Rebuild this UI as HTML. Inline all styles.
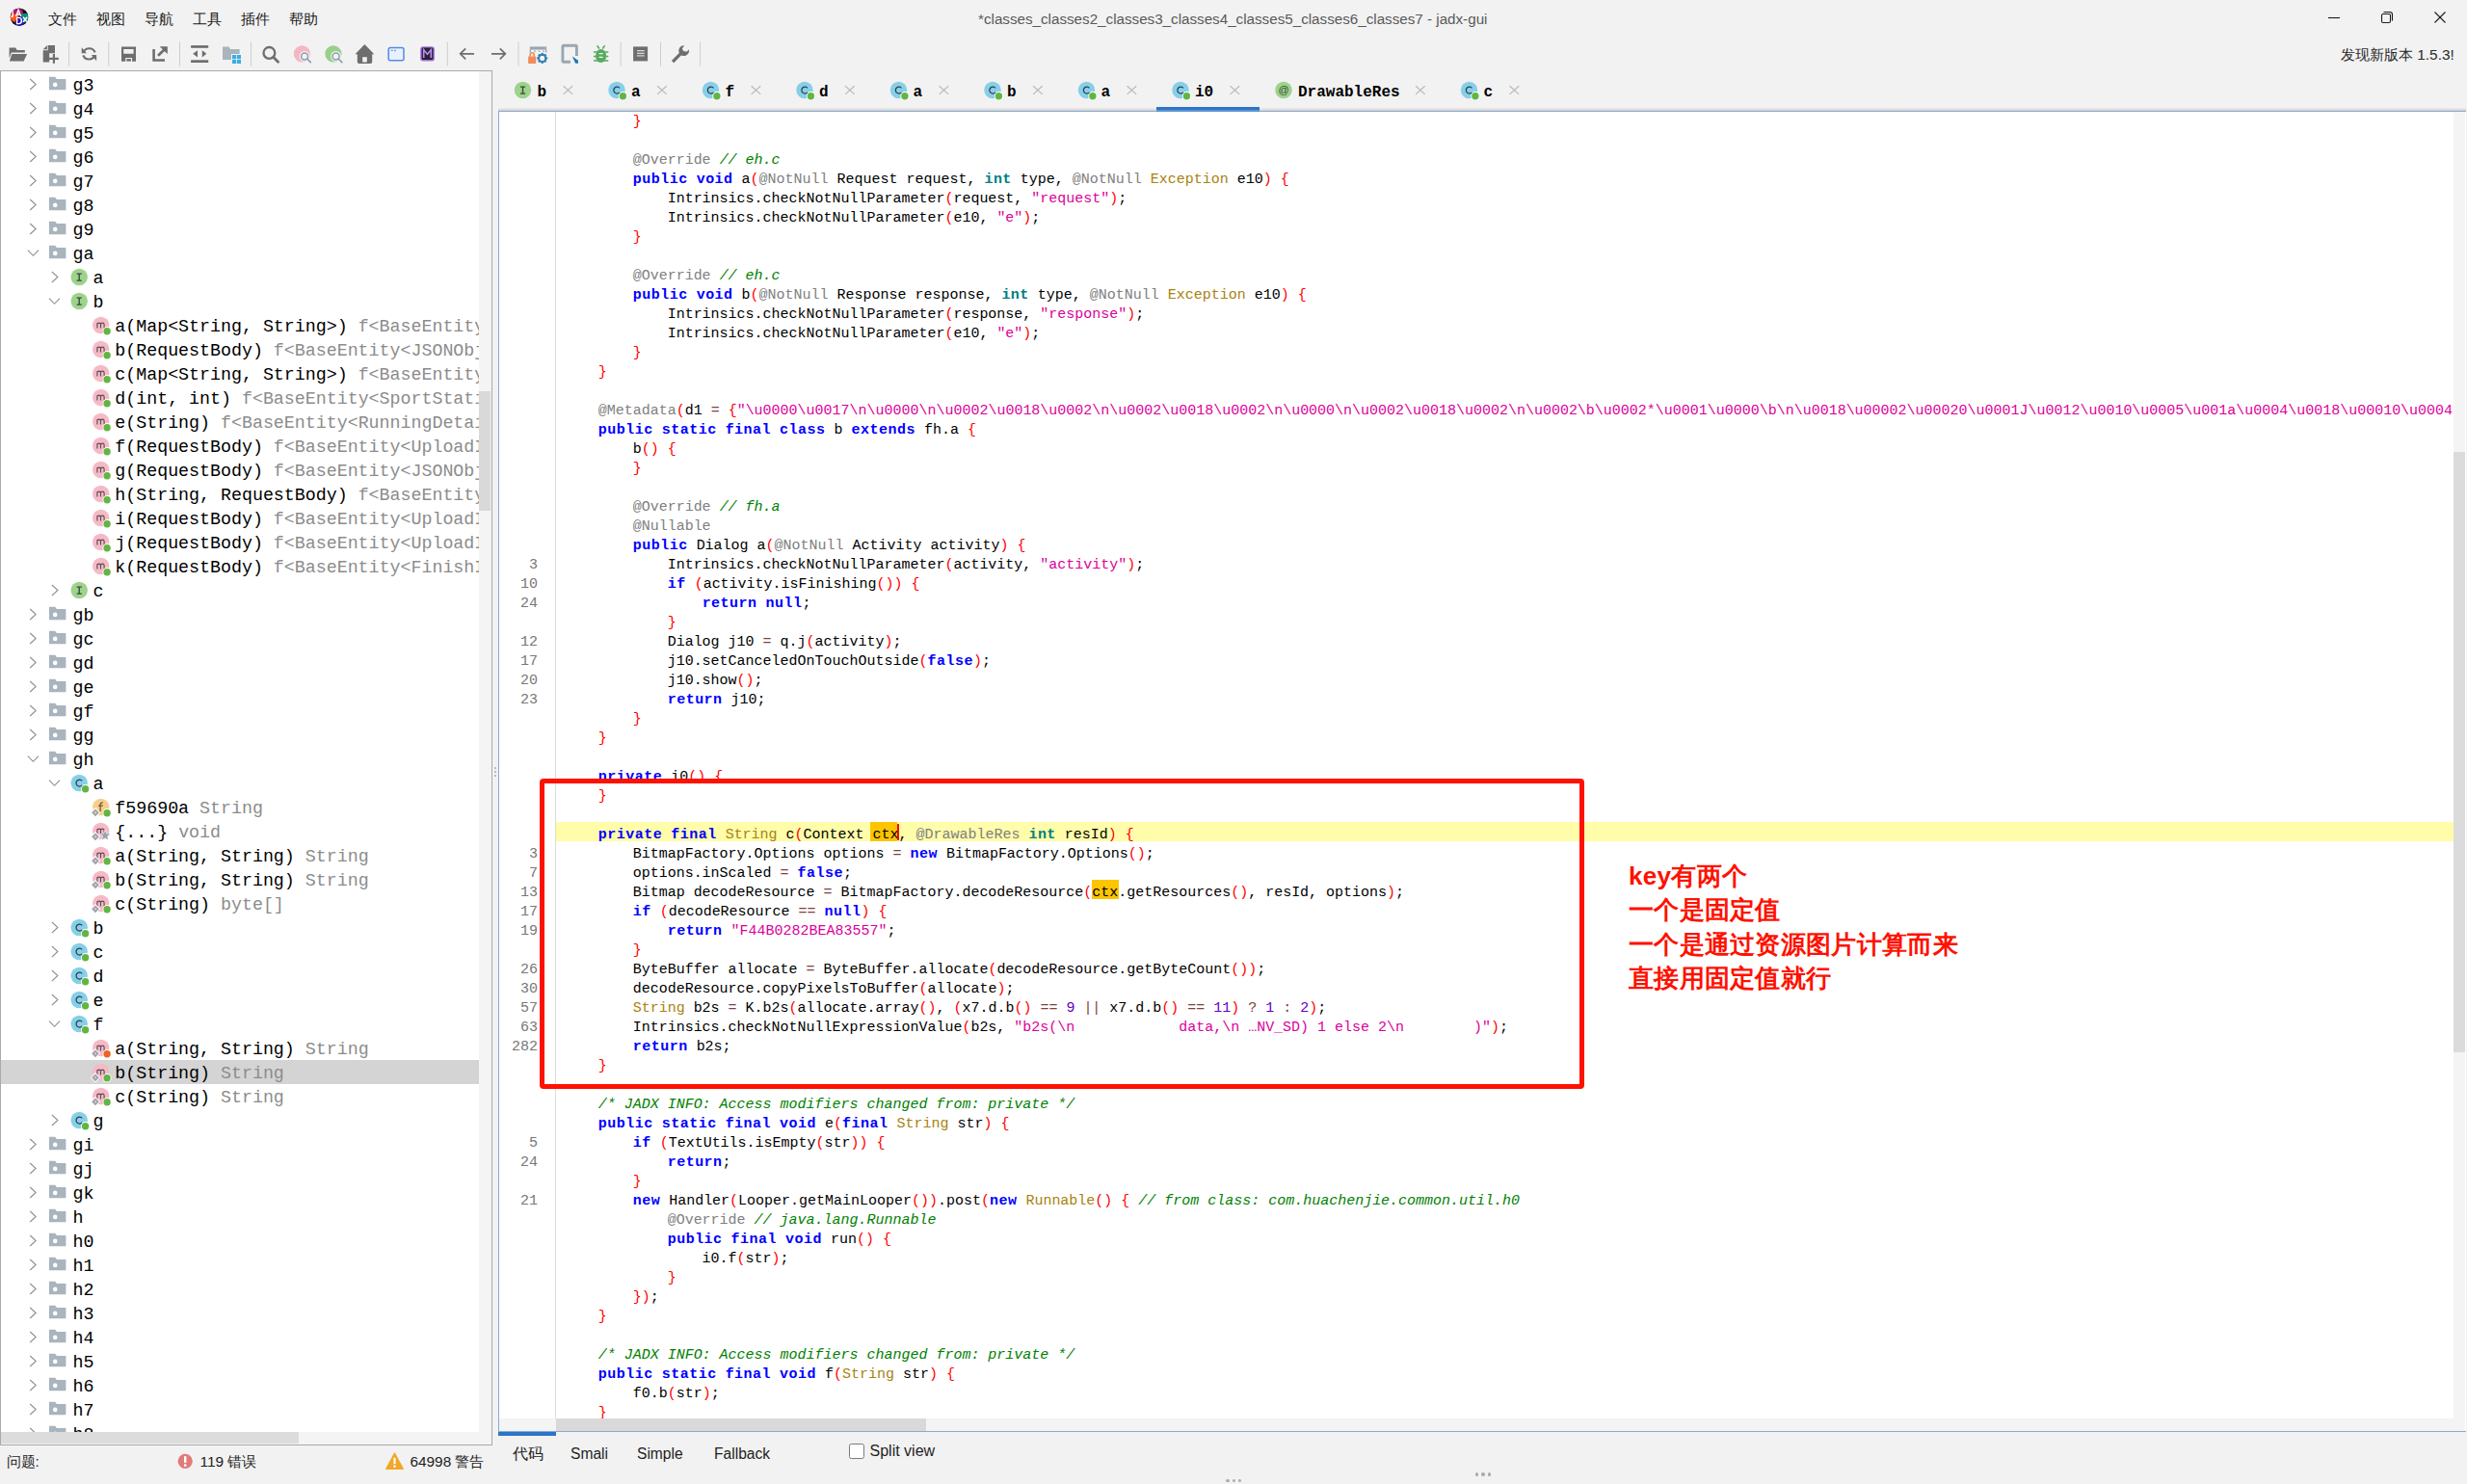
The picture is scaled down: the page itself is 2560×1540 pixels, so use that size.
<!DOCTYPE html><html><head><meta charset="utf-8"><title>jadx-gui</title><style>
*{margin:0;padding:0;box-sizing:border-box}
html,body{width:2560px;height:1540px;overflow:hidden;background:#f2f2f2}
body{position:relative;font-family:"Liberation Sans", sans-serif}
.a{position:absolute}
.m{font-family:"Liberation Mono", monospace;white-space:pre}
.s{font-family:"Liberation Sans", sans-serif;white-space:pre}
.kw{color:#0000ff;font-weight:bold;letter-spacing:0.5px}
.dt{color:#008080;font-weight:bold;letter-spacing:0.5px}
.an{color:#808080}
.cm{color:#008000;font-style:italic}
.st{color:#dc009c}
.sp{color:#ff0000}
.op{color:#804040}
.nu{color:#6400c8}
.fn{color:#a8820e}
.g{color:#8c8c8c}
svg{position:absolute;overflow:visible}
</style></head><body>
<svg class="a" style="left:0;top:0" width="40" height="36" viewBox="0 0 40 36">
<defs><clipPath id="lc"><circle cx="20" cy="17.7" r="9.3"/></clipPath></defs>
<circle cx="20" cy="17.7" r="9.3" fill="#0a0a0a"/>
<g clip-path="url(#lc)">
<path d="M12.5,11 L16,9.2 L23,9.6 L24.2,14 L19.8,16 L12.5,15 Z" fill="#b3147c"/>
<path d="M10.5,16 L12.8,14.2 L20.5,15.2 L15.2,23.2 L10.8,20.2 Z" fill="#ff5a1e"/>
<path d="M22.3,14.2 L29.5,13.6 L29.5,22 L24.8,24 L21.5,18.5 Z" fill="#0e8c7b"/>
<path d="M14.8,24.2 L20.6,17.2 L22.6,17.6 L25.6,24.6 L20,27.2 Z" fill="#2a0fc0"/>
<path d="M11.4,11.6 H13.2 V16.2 Q13.2,17.6 11.4,17.4" fill="none" stroke="#ffffff" stroke-width="1.4"/>
<path d="M16.6,17 L19.1,10.2 L21.7,17 M17.6,14.8 H20.7" fill="none" stroke="#ffffff" stroke-width="1.4"/>
<path d="M17.6,18.4 H19.6 Q22.4,18.4 22.4,21.5 Q22.4,24.6 19.6,24.6 H17.6 Z" fill="none" stroke="#ffffff" stroke-width="1.4"/>
<path d="M24,17.8 L28.2,22.8 M28.2,17.8 L24,22.8" fill="none" stroke="#ffffff" stroke-width="1.4"/>
</g>
</svg>
<div class="a s" style="left:50px;top:10.30px;font-size:15px;line-height:20px;color:#1a1a1a">文件</div>
<div class="a s" style="left:100px;top:10.30px;font-size:15px;line-height:20px;color:#1a1a1a">视图</div>
<div class="a s" style="left:150px;top:10.30px;font-size:15px;line-height:20px;color:#1a1a1a">导航</div>
<div class="a s" style="left:200px;top:10.30px;font-size:15px;line-height:20px;color:#1a1a1a">工具</div>
<div class="a s" style="left:250px;top:10.30px;font-size:15px;line-height:20px;color:#1a1a1a">插件</div>
<div class="a s" style="left:300px;top:10.30px;font-size:15px;line-height:20px;color:#1a1a1a">帮助</div>
<div class="a s" style="left:1015px;top:10.23px;font-size:15.2px;line-height:20px;color:#5a5a5a">*classes_classes2_classes3_classes4_classes5_classes6_classes7 - jadx-gui</div>
<svg class="a" style="left:0;top:0" width="2560" height="36">
<line x1="2416" y1="18.5" x2="2428" y2="18.5" stroke="#1a1a1a" stroke-width="1.1"/>
<rect x="2471.5" y="14.5" width="9" height="9" rx="1.5" fill="none" stroke="#1a1a1a" stroke-width="1.1"/>
<path d="M2473.5,12.5 h6.5 a2.5,2.5 0 0 1 2.5,2.5 v6.5" fill="none" stroke="#1a1a1a" stroke-width="1.1"/>
<line x1="2526.5" y1="12.5" x2="2537.5" y2="23.5" stroke="#1a1a1a" stroke-width="1.1"/>
<line x1="2537.5" y1="12.5" x2="2526.5" y2="23.5" stroke="#1a1a1a" stroke-width="1.1"/>
</svg>
<svg class="a" style="left:0;top:0" width="740" height="74"><line x1="71.6" y1="43.5" x2="71.6" y2="68.5" stroke="#cdcdcd" stroke-width="1"/><line x1="112.8" y1="43.5" x2="112.8" y2="68.5" stroke="#cdcdcd" stroke-width="1"/><line x1="186.5" y1="43.5" x2="186.5" y2="68.5" stroke="#cdcdcd" stroke-width="1"/><line x1="260.5" y1="43.5" x2="260.5" y2="68.5" stroke="#cdcdcd" stroke-width="1"/><line x1="464.3" y1="43.5" x2="464.3" y2="68.5" stroke="#cdcdcd" stroke-width="1"/><line x1="538" y1="43.5" x2="538" y2="68.5" stroke="#cdcdcd" stroke-width="1"/><line x1="644.2" y1="43.5" x2="644.2" y2="68.5" stroke="#cdcdcd" stroke-width="1"/><line x1="685.5" y1="43.5" x2="685.5" y2="68.5" stroke="#cdcdcd" stroke-width="1"/><line x1="726.6" y1="43.5" x2="726.6" y2="68.5" stroke="#cdcdcd" stroke-width="1"/><path d="M9.6,49.6 H16.2 L17.7,51.9 H25.8 V54.6 H11.8 L9.6,60.3 Z" fill="#6e6e6e"/><path d="M12.3,55.9 H28.1 L24.6,63.6 H9.9 Z" fill="#6e6e6e"/><path d="M49.7,47.1 H57 V55.2 H51.2 V64.6 H44.7 V52.3 H49.7 Z" fill="#6e6e6e"/><path d="M44.7,51.3 L48.9,47.1 V51.3 Z" fill="#6e6e6e"/><path d="M55.9,56 V65.7 M51,60.8 H60.8" stroke="#6e6e6e" stroke-width="2.2"/><path d="M86.6,54.4 A6.4,6.4 0 0 1 98.6,54.4" fill="none" stroke="#6e6e6e" stroke-width="2.1"/><path d="M84.7,49.2 V55.2 H90 Z" fill="#6e6e6e"/><path d="M98.3,57.4 A6.4,6.4 0 0 1 86.3,57.4" fill="none" stroke="#6e6e6e" stroke-width="2.1"/><path d="M100.1,63.2 V56.9 H94.8 Z" fill="#6e6e6e"/><path d="M126,48.4 H141 V63.8 H137.1 V60 H130.2 V63.8 H126 Z M128.2,50.9 V55.7 H138.6 V50.9 Z" fill="#6e6e6e" fill-rule="evenodd"/><rect x="131.3" y="61.1" width="4.6" height="2.5" fill="#6e6e6e"/><path d="M159.6,51.1 V62.5 H171" fill="none" stroke="#6e6e6e" stroke-width="2.6"/><path d="M164,57.8 L170.5,51.5" stroke="#6e6e6e" stroke-width="2.6"/><path d="M165.6,48.2 H173.8 V56 Z" fill="#6e6e6e"/><rect x="198.1" y="47.1" width="18.1" height="2.7" fill="#6e6e6e"/><rect x="198.1" y="62.3" width="18.1" height="2.7" fill="#6e6e6e"/><path d="M200.2,55.8 L205,52.2 V59.6 Z M214.3,55.8 L209.8,52.2 V59.6 Z" fill="#6e6e6e"/><path d="M231,48.4 H237.6 L239,50.9 H248.6 V56 H240 V62 H231 Z" fill="#a9b4bd"/><rect x="241" y="57" width="4.1" height="4.1" fill="#38aee2"/><rect x="245.9" y="57" width="4.1" height="4.1" fill="#38aee2"/><rect x="241" y="61.9" width="4.1" height="4.1" fill="#38aee2"/><rect x="245.9" y="61.9" width="4.1" height="4.1" fill="#38aee2"/><circle cx="279.4" cy="54.9" r="5.9" fill="none" stroke="#6e6e6e" stroke-width="2.3"/><path d="M283.6,59.2 L288.6,64.2" stroke="#6e6e6e" stroke-width="2.7" stroke-linecap="round"/><circle cx="313.4" cy="55.9" r="8.6" fill="#f5b6c3"/><circle cx="316.1" cy="58.4" r="5.4" fill="#f2f2f2"/><circle cx="316.1" cy="58.4" r="3.5" fill="none" stroke="#8d9eab" stroke-width="1.5"/><path d="M318.7,61 L322.3,64.6" stroke="#8d9eab" stroke-width="1.7" stroke-linecap="round"/><circle cx="345.9" cy="55.9" r="8.6" fill="#98d08a"/><circle cx="348.6" cy="58.4" r="5.4" fill="#f2f2f2"/><circle cx="348.6" cy="58.4" r="3.5" fill="none" stroke="#8d9eab" stroke-width="1.5"/><path d="M351.2,61 L354.8,64.6" stroke="#8d9eab" stroke-width="1.7" stroke-linecap="round"/><path d="M378.4,46 L388.3,56.2 H386.2 V64.2 Q386.2,66 384.4,66 H372.6 Q370.8,66 370.8,64.2 V56.2 H368.5 Z" fill="#6e6e6e"/><rect x="376.2" y="59.2" width="4.6" height="5.3" fill="#f2f2f2"/><rect x="403.2" y="49.4" width="15.8" height="13.4" rx="2" fill="#e8f0fd" stroke="#4f8be9" stroke-width="1.5"/><rect x="405.8" y="51.8" width="2" height="1.3" fill="#7f9fc8"/><rect x="409" y="51.8" width="2" height="1.3" fill="#7f9fc8"/><rect x="436.9" y="48.9" width="13.3" height="13.8" rx="2" fill="#2a2236" stroke="#a173e0" stroke-width="1.4"/><path d="M439.7,60 V51.6 L443.5,56.2 L447.3,51.6 V60" fill="none" stroke="#b88ef0" stroke-width="1.6"/><path d="M477.6,55.8 H492 M483.2,50.3 L477.6,55.8 L483.2,61.3" fill="none" stroke="#6e6e6e" stroke-width="1.7"/><path d="M510,55.8 H524.4 M518.8,50.3 L524.4,55.8 L518.8,61.3" fill="none" stroke="#6e6e6e" stroke-width="1.7"/><rect x="549.9" y="48.4" width="17.2" height="3.2" fill="#9aa7b0"/><path d="M550.3,51.5 V54.6 M555,52.5 V54 M559.5,52.5 V54 M564,52.5 V54 M566.7,51.5 V54.6" stroke="#9aa7b0" stroke-width="1.4"/><path d="M550.2,58.8 V56.8 A2,2 0 0 1 554.2,56.8 V58.8" fill="none" stroke="#f28b5a" stroke-width="1.6"/><rect x="548.1" y="58.6" width="8.1" height="7.3" rx="0.6" fill="#f28b5a"/><g transform="translate(562.7,60.4)" fill="#2f80b5"><rect x="-1.1" y="-5.5" width="2.2" height="2.6" transform="rotate(0)"/><rect x="-1.1" y="-5.5" width="2.2" height="2.6" transform="rotate(45)"/><rect x="-1.1" y="-5.5" width="2.2" height="2.6" transform="rotate(90)"/><rect x="-1.1" y="-5.5" width="2.2" height="2.6" transform="rotate(135)"/><rect x="-1.1" y="-5.5" width="2.2" height="2.6" transform="rotate(180)"/><rect x="-1.1" y="-5.5" width="2.2" height="2.6" transform="rotate(225)"/><rect x="-1.1" y="-5.5" width="2.2" height="2.6" transform="rotate(270)"/><rect x="-1.1" y="-5.5" width="2.2" height="2.6" transform="rotate(315)"/><circle r="3.6" fill="none" stroke="#2f80b5" stroke-width="2"/></g><path d="M592,64.2 H585 Q583.9,64.2 583.9,63 V48.3 Q583.9,47.2 585,47.2 H597.3 Q598.4,47.2 598.4,48.3 V58" fill="none" stroke="#9aa7b0" stroke-width="2.9"/><path d="M593.8,58.6 L600,62.7 V65.8 H597.2 Z" fill="#1e78b4"/><g fill="#5aab62"><ellipse cx="623.6" cy="58" rx="5.6" ry="7"/><path d="M619.6,47.3 L622,50.6 M627.6,47.3 L625.2,50.6" stroke="#5aab62" stroke-width="1.6"/><path d="M615.9,54 H631.3 M615.9,58.5 H631.3 M615.9,63 H631.3" stroke="#5aab62" stroke-width="1.5"/></g><path d="M621.6,55.6 H625.6 M621.6,59.4 H625.6" stroke="#f2f2f2" stroke-width="1.4"/><rect x="657.1" y="48.4" width="15" height="15" fill="#6e6e6e"/><path d="M661,52.6 H668.7 M661,55.3 H668.7 M661,57.9 H668.7" stroke="#d8d8d8" stroke-width="1.3"/><path d="M699.2,63 L707.6,54.6" stroke="#6e6e6e" stroke-width="3.2" stroke-linecap="square"/><path d="M706,56.4 A5.3,5.3 0 0 1 710.2,47.3 L707.8,50.4 L709.6,53.3 L712.9,53.6 L714.8,51.2 A5.3,5.3 0 0 1 706,56.4 Z" fill="#6e6e6e"/></svg>
<div class="a s" style="left:2429px;top:46.66px;font-size:15.4px;line-height:20px;color:#2a2a2a">发现新版本 1.5.3!</div>
<div class="a" style="left:0;top:73px;width:511px;height:427px;"></div>
<div class="a" style="left:0;top:73px;width:511px;height:1427px;border:1px solid #aaaaaa;background:#f4f4f4"></div>
<div class="a" style="left:1px;top:74px;width:496px;height:1412px;background:#ffffff;overflow:hidden" id="tree">
<div class="a m" style="left:74.5px;top:3.13px;font-size:18.3px;line-height:25px;color:#000">g3</div><div class="a m" style="left:74.5px;top:28.13px;font-size:18.3px;line-height:25px;color:#000">g4</div><div class="a m" style="left:74.5px;top:53.13px;font-size:18.3px;line-height:25px;color:#000">g5</div><div class="a m" style="left:74.5px;top:78.13px;font-size:18.3px;line-height:25px;color:#000">g6</div><div class="a m" style="left:74.5px;top:103.13px;font-size:18.3px;line-height:25px;color:#000">g7</div><div class="a m" style="left:74.5px;top:128.13px;font-size:18.3px;line-height:25px;color:#000">g8</div><div class="a m" style="left:74.5px;top:153.13px;font-size:18.3px;line-height:25px;color:#000">g9</div><div class="a m" style="left:74.5px;top:178.13px;font-size:18.3px;line-height:25px;color:#000">ga</div><div class="a m" style="left:95.6px;top:203.13px;font-size:18.3px;line-height:25px;color:#000">a</div><div class="a m" style="left:95.6px;top:228.13px;font-size:18.3px;line-height:25px;color:#000">b</div><div class="a m" style="left:118.3px;top:253.13px;font-size:18.3px;line-height:25px;color:#000">a(Map&lt;String, String&gt;) <span class="g">f&lt;BaseEntity&lt;JSONObject&gt;&gt;</span></div><div class="a m" style="left:118.3px;top:278.13px;font-size:18.3px;line-height:25px;color:#000">b(RequestBody) <span class="g">f&lt;BaseEntity&lt;JSONObject&gt;&gt;</span></div><div class="a m" style="left:118.3px;top:303.13px;font-size:18.3px;line-height:25px;color:#000">c(Map&lt;String, String&gt;) <span class="g">f&lt;BaseEntity&lt;JSONObject&gt;&gt;</span></div><div class="a m" style="left:118.3px;top:328.13px;font-size:18.3px;line-height:25px;color:#000">d(int, int) <span class="g">f&lt;BaseEntity&lt;SportStatistics&gt;&gt;</span></div><div class="a m" style="left:118.3px;top:353.13px;font-size:18.3px;line-height:25px;color:#000">e(String) <span class="g">f&lt;BaseEntity&lt;RunningDetail&gt;&gt;</span></div><div class="a m" style="left:118.3px;top:378.13px;font-size:18.3px;line-height:25px;color:#000">f(RequestBody) <span class="g">f&lt;BaseEntity&lt;UploadInfo&gt;&gt;</span></div><div class="a m" style="left:118.3px;top:403.13px;font-size:18.3px;line-height:25px;color:#000">g(RequestBody) <span class="g">f&lt;BaseEntity&lt;JSONObject&gt;&gt;</span></div><div class="a m" style="left:118.3px;top:428.13px;font-size:18.3px;line-height:25px;color:#000">h(String, RequestBody) <span class="g">f&lt;BaseEntity&lt;JSONObject&gt;&gt;</span></div><div class="a m" style="left:118.3px;top:453.13px;font-size:18.3px;line-height:25px;color:#000">i(RequestBody) <span class="g">f&lt;BaseEntity&lt;UploadInfo&gt;&gt;</span></div><div class="a m" style="left:118.3px;top:478.13px;font-size:18.3px;line-height:25px;color:#000">j(RequestBody) <span class="g">f&lt;BaseEntity&lt;UploadInfo&gt;&gt;</span></div><div class="a m" style="left:118.3px;top:503.13px;font-size:18.3px;line-height:25px;color:#000">k(RequestBody) <span class="g">f&lt;BaseEntity&lt;FinishInfo&gt;&gt;</span></div><div class="a m" style="left:95.6px;top:528.13px;font-size:18.3px;line-height:25px;color:#000">c</div><div class="a m" style="left:74.5px;top:553.13px;font-size:18.3px;line-height:25px;color:#000">gb</div><div class="a m" style="left:74.5px;top:578.13px;font-size:18.3px;line-height:25px;color:#000">gc</div><div class="a m" style="left:74.5px;top:603.13px;font-size:18.3px;line-height:25px;color:#000">gd</div><div class="a m" style="left:74.5px;top:628.13px;font-size:18.3px;line-height:25px;color:#000">ge</div><div class="a m" style="left:74.5px;top:653.13px;font-size:18.3px;line-height:25px;color:#000">gf</div><div class="a m" style="left:74.5px;top:678.13px;font-size:18.3px;line-height:25px;color:#000">gg</div><div class="a m" style="left:74.5px;top:703.13px;font-size:18.3px;line-height:25px;color:#000">gh</div><div class="a m" style="left:95.6px;top:728.13px;font-size:18.3px;line-height:25px;color:#000">a</div><div class="a m" style="left:118.3px;top:753.13px;font-size:18.3px;line-height:25px;color:#000">f59690a <span class="g">String</span></div><div class="a m" style="left:118.3px;top:778.13px;font-size:18.3px;line-height:25px;color:#000">{...} <span class="g">void</span></div><div class="a m" style="left:118.3px;top:803.13px;font-size:18.3px;line-height:25px;color:#000">a(String, String) <span class="g">String</span></div><div class="a m" style="left:118.3px;top:828.13px;font-size:18.3px;line-height:25px;color:#000">b(String, String) <span class="g">String</span></div><div class="a m" style="left:118.3px;top:853.13px;font-size:18.3px;line-height:25px;color:#000">c(String) <span class="g">byte[]</span></div><div class="a m" style="left:95.6px;top:878.13px;font-size:18.3px;line-height:25px;color:#000">b</div><div class="a m" style="left:95.6px;top:903.13px;font-size:18.3px;line-height:25px;color:#000">c</div><div class="a m" style="left:95.6px;top:928.13px;font-size:18.3px;line-height:25px;color:#000">d</div><div class="a m" style="left:95.6px;top:953.13px;font-size:18.3px;line-height:25px;color:#000">e</div><div class="a m" style="left:95.6px;top:978.13px;font-size:18.3px;line-height:25px;color:#000">f</div><div class="a m" style="left:118.3px;top:1003.13px;font-size:18.3px;line-height:25px;color:#000">a(String, String) <span class="g">String</span></div><div class="a" style="left:0;top:1026px;width:497px;height:25px;background:#d4d4d4"></div><div class="a m" style="left:118.3px;top:1028.13px;font-size:18.3px;line-height:25px;color:#000">b(String) <span class="g">String</span></div><div class="a m" style="left:118.3px;top:1053.13px;font-size:18.3px;line-height:25px;color:#000">c(String) <span class="g">String</span></div><div class="a m" style="left:95.6px;top:1078.13px;font-size:18.3px;line-height:25px;color:#000">g</div><div class="a m" style="left:74.5px;top:1103.13px;font-size:18.3px;line-height:25px;color:#000">gi</div><div class="a m" style="left:74.5px;top:1128.13px;font-size:18.3px;line-height:25px;color:#000">gj</div><div class="a m" style="left:74.5px;top:1153.13px;font-size:18.3px;line-height:25px;color:#000">gk</div><div class="a m" style="left:74.5px;top:1178.13px;font-size:18.3px;line-height:25px;color:#000">h</div><div class="a m" style="left:74.5px;top:1203.13px;font-size:18.3px;line-height:25px;color:#000">h0</div><div class="a m" style="left:74.5px;top:1228.13px;font-size:18.3px;line-height:25px;color:#000">h1</div><div class="a m" style="left:74.5px;top:1253.13px;font-size:18.3px;line-height:25px;color:#000">h2</div><div class="a m" style="left:74.5px;top:1278.13px;font-size:18.3px;line-height:25px;color:#000">h3</div><div class="a m" style="left:74.5px;top:1303.13px;font-size:18.3px;line-height:25px;color:#000">h4</div><div class="a m" style="left:74.5px;top:1328.13px;font-size:18.3px;line-height:25px;color:#000">h5</div><div class="a m" style="left:74.5px;top:1353.13px;font-size:18.3px;line-height:25px;color:#000">h6</div><div class="a m" style="left:74.5px;top:1378.13px;font-size:18.3px;line-height:25px;color:#000">h7</div><div class="a m" style="left:74.5px;top:1403.13px;font-size:18.3px;line-height:25px;color:#000">h8</div>
<svg class="a" style="left:0;top:0" width="496" height="1412"><path d="M30.2,8.0 L36.2,13.5 L30.2,19.0" fill="none" stroke="#8e8e8e" stroke-width="1.05"/><path d="M50,5.8 H56.3 L57.8,8.1 H67.4 V19.3 H50 Z" fill="#a9b4bd"/><circle cx="56.2" cy="13.899999999999999" r="2.3" fill="#ffffff"/><path d="M30.2,33.0 L36.2,38.5 L30.2,44.0" fill="none" stroke="#8e8e8e" stroke-width="1.05"/><path d="M50,30.8 H56.3 L57.8,33.1 H67.4 V44.3 H50 Z" fill="#a9b4bd"/><circle cx="56.2" cy="38.9" r="2.3" fill="#ffffff"/><path d="M30.2,58.0 L36.2,63.5 L30.2,69.0" fill="none" stroke="#8e8e8e" stroke-width="1.05"/><path d="M50,55.8 H56.3 L57.8,58.099999999999994 H67.4 V69.3 H50 Z" fill="#a9b4bd"/><circle cx="56.2" cy="63.9" r="2.3" fill="#ffffff"/><path d="M30.2,83.0 L36.2,88.5 L30.2,94.0" fill="none" stroke="#8e8e8e" stroke-width="1.05"/><path d="M50,80.8 H56.3 L57.8,83.1 H67.4 V94.3 H50 Z" fill="#a9b4bd"/><circle cx="56.2" cy="88.89999999999999" r="2.3" fill="#ffffff"/><path d="M30.2,108.0 L36.2,113.5 L30.2,119.0" fill="none" stroke="#8e8e8e" stroke-width="1.05"/><path d="M50,105.8 H56.3 L57.8,108.1 H67.4 V119.3 H50 Z" fill="#a9b4bd"/><circle cx="56.2" cy="113.89999999999999" r="2.3" fill="#ffffff"/><path d="M30.2,133.0 L36.2,138.5 L30.2,144.0" fill="none" stroke="#8e8e8e" stroke-width="1.05"/><path d="M50,130.8 H56.3 L57.8,133.10000000000002 H67.4 V144.3 H50 Z" fill="#a9b4bd"/><circle cx="56.2" cy="138.9" r="2.3" fill="#ffffff"/><path d="M30.2,158.0 L36.2,163.5 L30.2,169.0" fill="none" stroke="#8e8e8e" stroke-width="1.05"/><path d="M50,155.8 H56.3 L57.8,158.10000000000002 H67.4 V169.3 H50 Z" fill="#a9b4bd"/><circle cx="56.2" cy="163.9" r="2.3" fill="#ffffff"/><path d="M27.9,185.7 L33.4,191.3 L38.9,185.7" fill="none" stroke="#8e8e8e" stroke-width="1.05"/><path d="M50,180.8 H56.3 L57.8,183.10000000000002 H67.4 V194.3 H50 Z" fill="#a9b4bd"/><circle cx="56.2" cy="188.9" r="2.3" fill="#ffffff"/><path d="M52.9,208.0 L58.9,213.5 L52.9,219.0" fill="none" stroke="#8e8e8e" stroke-width="1.05"/><circle cx="81.2" cy="213.5" r="8.7" fill="#9dd38c"/><path d="M78.60000000000001,210.1 H83.8 M81.2,210.1 V217.1 M78.60000000000001,217.1 H83.8" fill="none" stroke="#3c4a3a" stroke-width="1.4"/><path d="M50,235.7 L55.5,241.3 L61,235.7" fill="none" stroke="#8e8e8e" stroke-width="1.05"/><circle cx="81.2" cy="238.5" r="8.7" fill="#9dd38c"/><path d="M78.60000000000001,235.1 H83.8 M81.2,235.1 V242.1 M78.60000000000001,242.1 H83.8" fill="none" stroke="#3c4a3a" stroke-width="1.4"/><circle cx="103.7" cy="263.5" r="8.7" fill="#f6b9c6"/><path d="M99.9,266.5 V261.3 M99.9,262.7 Q99.9,261.1 101.7,261.1 Q103.5,261.1 103.5,262.7 V266.5 M103.5,262.7 Q103.5,261.1 105.3,261.1 Q107.10000000000001,261.1 107.10000000000001,262.7 V266.5" fill="none" stroke="#5a4a50" stroke-width="1.1"/><circle cx="110.10000000000001" cy="269.7" r="4.6" fill="#ffffff"/><circle cx="110.10000000000001" cy="269.7" r="3.7" fill="#62b543"/><circle cx="103.7" cy="288.5" r="8.7" fill="#f6b9c6"/><path d="M99.9,291.5 V286.3 M99.9,287.7 Q99.9,286.1 101.7,286.1 Q103.5,286.1 103.5,287.7 V291.5 M103.5,287.7 Q103.5,286.1 105.3,286.1 Q107.10000000000001,286.1 107.10000000000001,287.7 V291.5" fill="none" stroke="#5a4a50" stroke-width="1.1"/><circle cx="110.10000000000001" cy="294.7" r="4.6" fill="#ffffff"/><circle cx="110.10000000000001" cy="294.7" r="3.7" fill="#62b543"/><circle cx="103.7" cy="313.5" r="8.7" fill="#f6b9c6"/><path d="M99.9,316.5 V311.3 M99.9,312.7 Q99.9,311.1 101.7,311.1 Q103.5,311.1 103.5,312.7 V316.5 M103.5,312.7 Q103.5,311.1 105.3,311.1 Q107.10000000000001,311.1 107.10000000000001,312.7 V316.5" fill="none" stroke="#5a4a50" stroke-width="1.1"/><circle cx="110.10000000000001" cy="319.7" r="4.6" fill="#ffffff"/><circle cx="110.10000000000001" cy="319.7" r="3.7" fill="#62b543"/><circle cx="103.7" cy="338.5" r="8.7" fill="#f6b9c6"/><path d="M99.9,341.5 V336.3 M99.9,337.7 Q99.9,336.1 101.7,336.1 Q103.5,336.1 103.5,337.7 V341.5 M103.5,337.7 Q103.5,336.1 105.3,336.1 Q107.10000000000001,336.1 107.10000000000001,337.7 V341.5" fill="none" stroke="#5a4a50" stroke-width="1.1"/><circle cx="110.10000000000001" cy="344.7" r="4.6" fill="#ffffff"/><circle cx="110.10000000000001" cy="344.7" r="3.7" fill="#62b543"/><circle cx="103.7" cy="363.5" r="8.7" fill="#f6b9c6"/><path d="M99.9,366.5 V361.3 M99.9,362.7 Q99.9,361.1 101.7,361.1 Q103.5,361.1 103.5,362.7 V366.5 M103.5,362.7 Q103.5,361.1 105.3,361.1 Q107.10000000000001,361.1 107.10000000000001,362.7 V366.5" fill="none" stroke="#5a4a50" stroke-width="1.1"/><circle cx="110.10000000000001" cy="369.7" r="4.6" fill="#ffffff"/><circle cx="110.10000000000001" cy="369.7" r="3.7" fill="#62b543"/><circle cx="103.7" cy="388.5" r="8.7" fill="#f6b9c6"/><path d="M99.9,391.5 V386.3 M99.9,387.7 Q99.9,386.1 101.7,386.1 Q103.5,386.1 103.5,387.7 V391.5 M103.5,387.7 Q103.5,386.1 105.3,386.1 Q107.10000000000001,386.1 107.10000000000001,387.7 V391.5" fill="none" stroke="#5a4a50" stroke-width="1.1"/><circle cx="110.10000000000001" cy="394.7" r="4.6" fill="#ffffff"/><circle cx="110.10000000000001" cy="394.7" r="3.7" fill="#62b543"/><circle cx="103.7" cy="413.5" r="8.7" fill="#f6b9c6"/><path d="M99.9,416.5 V411.3 M99.9,412.7 Q99.9,411.1 101.7,411.1 Q103.5,411.1 103.5,412.7 V416.5 M103.5,412.7 Q103.5,411.1 105.3,411.1 Q107.10000000000001,411.1 107.10000000000001,412.7 V416.5" fill="none" stroke="#5a4a50" stroke-width="1.1"/><circle cx="110.10000000000001" cy="419.7" r="4.6" fill="#ffffff"/><circle cx="110.10000000000001" cy="419.7" r="3.7" fill="#62b543"/><circle cx="103.7" cy="438.5" r="8.7" fill="#f6b9c6"/><path d="M99.9,441.5 V436.3 M99.9,437.7 Q99.9,436.1 101.7,436.1 Q103.5,436.1 103.5,437.7 V441.5 M103.5,437.7 Q103.5,436.1 105.3,436.1 Q107.10000000000001,436.1 107.10000000000001,437.7 V441.5" fill="none" stroke="#5a4a50" stroke-width="1.1"/><circle cx="110.10000000000001" cy="444.7" r="4.6" fill="#ffffff"/><circle cx="110.10000000000001" cy="444.7" r="3.7" fill="#62b543"/><circle cx="103.7" cy="463.5" r="8.7" fill="#f6b9c6"/><path d="M99.9,466.5 V461.3 M99.9,462.7 Q99.9,461.1 101.7,461.1 Q103.5,461.1 103.5,462.7 V466.5 M103.5,462.7 Q103.5,461.1 105.3,461.1 Q107.10000000000001,461.1 107.10000000000001,462.7 V466.5" fill="none" stroke="#5a4a50" stroke-width="1.1"/><circle cx="110.10000000000001" cy="469.7" r="4.6" fill="#ffffff"/><circle cx="110.10000000000001" cy="469.7" r="3.7" fill="#62b543"/><circle cx="103.7" cy="488.5" r="8.7" fill="#f6b9c6"/><path d="M99.9,491.5 V486.3 M99.9,487.7 Q99.9,486.1 101.7,486.1 Q103.5,486.1 103.5,487.7 V491.5 M103.5,487.7 Q103.5,486.1 105.3,486.1 Q107.10000000000001,486.1 107.10000000000001,487.7 V491.5" fill="none" stroke="#5a4a50" stroke-width="1.1"/><circle cx="110.10000000000001" cy="494.7" r="4.6" fill="#ffffff"/><circle cx="110.10000000000001" cy="494.7" r="3.7" fill="#62b543"/><circle cx="103.7" cy="513.5" r="8.7" fill="#f6b9c6"/><path d="M99.9,516.5 V511.3 M99.9,512.7 Q99.9,511.1 101.7,511.1 Q103.5,511.1 103.5,512.7 V516.5 M103.5,512.7 Q103.5,511.1 105.3,511.1 Q107.10000000000001,511.1 107.10000000000001,512.7 V516.5" fill="none" stroke="#5a4a50" stroke-width="1.1"/><circle cx="110.10000000000001" cy="519.7" r="4.6" fill="#ffffff"/><circle cx="110.10000000000001" cy="519.7" r="3.7" fill="#62b543"/><path d="M52.9,533.0 L58.9,538.5 L52.9,544.0" fill="none" stroke="#8e8e8e" stroke-width="1.05"/><circle cx="81.2" cy="538.5" r="8.7" fill="#9dd38c"/><path d="M78.60000000000001,535.1 H83.8 M81.2,535.1 V542.1 M78.60000000000001,542.1 H83.8" fill="none" stroke="#3c4a3a" stroke-width="1.4"/><path d="M30.2,558.0 L36.2,563.5 L30.2,569.0" fill="none" stroke="#8e8e8e" stroke-width="1.05"/><path d="M50,555.8 H56.3 L57.8,558.0999999999999 H67.4 V569.3 H50 Z" fill="#a9b4bd"/><circle cx="56.2" cy="563.9" r="2.3" fill="#ffffff"/><path d="M30.2,583.0 L36.2,588.5 L30.2,594.0" fill="none" stroke="#8e8e8e" stroke-width="1.05"/><path d="M50,580.8 H56.3 L57.8,583.0999999999999 H67.4 V594.3 H50 Z" fill="#a9b4bd"/><circle cx="56.2" cy="588.9" r="2.3" fill="#ffffff"/><path d="M30.2,608.0 L36.2,613.5 L30.2,619.0" fill="none" stroke="#8e8e8e" stroke-width="1.05"/><path d="M50,605.8 H56.3 L57.8,608.0999999999999 H67.4 V619.3 H50 Z" fill="#a9b4bd"/><circle cx="56.2" cy="613.9" r="2.3" fill="#ffffff"/><path d="M30.2,633.0 L36.2,638.5 L30.2,644.0" fill="none" stroke="#8e8e8e" stroke-width="1.05"/><path d="M50,630.8 H56.3 L57.8,633.0999999999999 H67.4 V644.3 H50 Z" fill="#a9b4bd"/><circle cx="56.2" cy="638.9" r="2.3" fill="#ffffff"/><path d="M30.2,658.0 L36.2,663.5 L30.2,669.0" fill="none" stroke="#8e8e8e" stroke-width="1.05"/><path d="M50,655.8 H56.3 L57.8,658.0999999999999 H67.4 V669.3 H50 Z" fill="#a9b4bd"/><circle cx="56.2" cy="663.9" r="2.3" fill="#ffffff"/><path d="M30.2,683.0 L36.2,688.5 L30.2,694.0" fill="none" stroke="#8e8e8e" stroke-width="1.05"/><path d="M50,680.8 H56.3 L57.8,683.0999999999999 H67.4 V694.3 H50 Z" fill="#a9b4bd"/><circle cx="56.2" cy="688.9" r="2.3" fill="#ffffff"/><path d="M27.9,710.7 L33.4,716.3 L38.9,710.7" fill="none" stroke="#8e8e8e" stroke-width="1.05"/><path d="M50,705.8 H56.3 L57.8,708.0999999999999 H67.4 V719.3 H50 Z" fill="#a9b4bd"/><circle cx="56.2" cy="713.9" r="2.3" fill="#ffffff"/><path d="M50,735.7 L55.5,741.3 L61,735.7" fill="none" stroke="#8e8e8e" stroke-width="1.05"/><circle cx="81.2" cy="738.5" r="8.7" fill="#87cfe9"/><path d="M84.2,736.3 A3.5,3.5 0 1 0 84.2,740.9" fill="none" stroke="#2e3f4a" stroke-width="1.25"/><circle cx="87.60000000000001" cy="744.7" r="4.6" fill="#ffffff"/><circle cx="87.60000000000001" cy="744.7" r="3.7" fill="#62b543"/><circle cx="103.7" cy="763.5" r="8.7" fill="#f7cf8b"/><path d="M105.7,758.9 Q103.7,758.5 103.10000000000001,760.5 V768.0 M101.10000000000001,762.1 H105.7" fill="none" stroke="#6a5535" stroke-width="1.2"/><path d="M98.0,764.0999999999999 L103.2,769.3 L98.0,774.5 L92.8,769.3 Z" fill="#ffffff"/><path d="M98.0,765.4 L101.9,769.3 L98.0,773.1999999999999 L94.1,769.3 Z" fill="#97a4ae"/><path d="M98.0,767.8 L99.5,769.3 L98.0,770.8 L96.5,769.3 Z" fill="#f7cf8b"/><circle cx="110.10000000000001" cy="769.7" r="4.6" fill="#ffffff"/><circle cx="110.10000000000001" cy="769.7" r="3.7" fill="#62b543"/><circle cx="103.7" cy="788.5" r="8.7" fill="#f6b9c6"/><path d="M99.9,791.5 V786.3 M99.9,787.7 Q99.9,786.1 101.7,786.1 Q103.5,786.1 103.5,787.7 V791.5 M103.5,787.7 Q103.5,786.1 105.3,786.1 Q107.10000000000001,786.1 107.10000000000001,787.7 V791.5" fill="none" stroke="#5a4a50" stroke-width="1.1"/><path d="M98.0,789.0999999999999 L103.2,794.3 L98.0,799.5 L92.8,794.3 Z" fill="#ffffff"/><path d="M98.0,790.4 L101.9,794.3 L98.0,798.1999999999999 L94.1,794.3 Z" fill="#97a4ae"/><path d="M98.0,792.8 L99.5,794.3 L98.0,795.8 L96.5,794.3 Z" fill="#f6b9c6"/><polygon points="108.10,787.70 109.45,791.24 113.24,791.43 110.29,793.81 111.27,797.47 108.10,795.40 104.93,797.47 105.91,793.81 102.96,791.43 106.75,791.24" fill="#97a4ae" stroke="#ffffff" stroke-width="1.1" stroke-linejoin="round" paint-order="stroke"/><circle cx="103.7" cy="813.5" r="8.7" fill="#f6b9c6"/><path d="M99.9,816.5 V811.3 M99.9,812.7 Q99.9,811.1 101.7,811.1 Q103.5,811.1 103.5,812.7 V816.5 M103.5,812.7 Q103.5,811.1 105.3,811.1 Q107.10000000000001,811.1 107.10000000000001,812.7 V816.5" fill="none" stroke="#5a4a50" stroke-width="1.1"/><path d="M98.0,814.0999999999999 L103.2,819.3 L98.0,824.5 L92.8,819.3 Z" fill="#ffffff"/><path d="M98.0,815.4 L101.9,819.3 L98.0,823.1999999999999 L94.1,819.3 Z" fill="#97a4ae"/><path d="M98.0,817.8 L99.5,819.3 L98.0,820.8 L96.5,819.3 Z" fill="#f6b9c6"/><circle cx="110.10000000000001" cy="819.7" r="4.6" fill="#ffffff"/><circle cx="110.10000000000001" cy="819.7" r="3.7" fill="#62b543"/><circle cx="103.7" cy="838.5" r="8.7" fill="#f6b9c6"/><path d="M99.9,841.5 V836.3 M99.9,837.7 Q99.9,836.1 101.7,836.1 Q103.5,836.1 103.5,837.7 V841.5 M103.5,837.7 Q103.5,836.1 105.3,836.1 Q107.10000000000001,836.1 107.10000000000001,837.7 V841.5" fill="none" stroke="#5a4a50" stroke-width="1.1"/><path d="M98.0,839.0999999999999 L103.2,844.3 L98.0,849.5 L92.8,844.3 Z" fill="#ffffff"/><path d="M98.0,840.4 L101.9,844.3 L98.0,848.1999999999999 L94.1,844.3 Z" fill="#97a4ae"/><path d="M98.0,842.8 L99.5,844.3 L98.0,845.8 L96.5,844.3 Z" fill="#f6b9c6"/><circle cx="110.10000000000001" cy="844.7" r="4.6" fill="#ffffff"/><circle cx="110.10000000000001" cy="844.7" r="3.7" fill="#62b543"/><circle cx="103.7" cy="863.5" r="8.7" fill="#f6b9c6"/><path d="M99.9,866.5 V861.3 M99.9,862.7 Q99.9,861.1 101.7,861.1 Q103.5,861.1 103.5,862.7 V866.5 M103.5,862.7 Q103.5,861.1 105.3,861.1 Q107.10000000000001,861.1 107.10000000000001,862.7 V866.5" fill="none" stroke="#5a4a50" stroke-width="1.1"/><path d="M98.0,864.0999999999999 L103.2,869.3 L98.0,874.5 L92.8,869.3 Z" fill="#ffffff"/><path d="M98.0,865.4 L101.9,869.3 L98.0,873.1999999999999 L94.1,869.3 Z" fill="#97a4ae"/><path d="M98.0,867.8 L99.5,869.3 L98.0,870.8 L96.5,869.3 Z" fill="#f6b9c6"/><circle cx="110.10000000000001" cy="869.7" r="4.6" fill="#ffffff"/><circle cx="110.10000000000001" cy="869.7" r="3.7" fill="#62b543"/><path d="M52.9,883.0 L58.9,888.5 L52.9,894.0" fill="none" stroke="#8e8e8e" stroke-width="1.05"/><circle cx="81.2" cy="888.5" r="8.7" fill="#87cfe9"/><path d="M84.2,886.3 A3.5,3.5 0 1 0 84.2,890.9" fill="none" stroke="#2e3f4a" stroke-width="1.25"/><circle cx="87.60000000000001" cy="894.7" r="4.6" fill="#ffffff"/><circle cx="87.60000000000001" cy="894.7" r="3.7" fill="#62b543"/><path d="M52.9,908.0 L58.9,913.5 L52.9,919.0" fill="none" stroke="#8e8e8e" stroke-width="1.05"/><circle cx="81.2" cy="913.5" r="8.7" fill="#87cfe9"/><path d="M84.2,911.3 A3.5,3.5 0 1 0 84.2,915.9" fill="none" stroke="#2e3f4a" stroke-width="1.25"/><circle cx="87.60000000000001" cy="919.7" r="4.6" fill="#ffffff"/><circle cx="87.60000000000001" cy="919.7" r="3.7" fill="#62b543"/><path d="M52.9,933.0 L58.9,938.5 L52.9,944.0" fill="none" stroke="#8e8e8e" stroke-width="1.05"/><circle cx="81.2" cy="938.5" r="8.7" fill="#87cfe9"/><path d="M84.2,936.3 A3.5,3.5 0 1 0 84.2,940.9" fill="none" stroke="#2e3f4a" stroke-width="1.25"/><circle cx="87.60000000000001" cy="944.7" r="4.6" fill="#ffffff"/><circle cx="87.60000000000001" cy="944.7" r="3.7" fill="#62b543"/><path d="M52.9,958.0 L58.9,963.5 L52.9,969.0" fill="none" stroke="#8e8e8e" stroke-width="1.05"/><circle cx="81.2" cy="963.5" r="8.7" fill="#87cfe9"/><path d="M84.2,961.3 A3.5,3.5 0 1 0 84.2,965.9" fill="none" stroke="#2e3f4a" stroke-width="1.25"/><circle cx="87.60000000000001" cy="969.7" r="4.6" fill="#ffffff"/><circle cx="87.60000000000001" cy="969.7" r="3.7" fill="#62b543"/><path d="M50,985.7 L55.5,991.3 L61,985.7" fill="none" stroke="#8e8e8e" stroke-width="1.05"/><circle cx="81.2" cy="988.5" r="8.7" fill="#87cfe9"/><path d="M84.2,986.3 A3.5,3.5 0 1 0 84.2,990.9" fill="none" stroke="#2e3f4a" stroke-width="1.25"/><circle cx="87.60000000000001" cy="994.7" r="4.6" fill="#ffffff"/><circle cx="87.60000000000001" cy="994.7" r="3.7" fill="#62b543"/><circle cx="103.7" cy="1013.5" r="8.7" fill="#f6b9c6"/><path d="M99.9,1016.5 V1011.3 M99.9,1012.7 Q99.9,1011.1 101.7,1011.1 Q103.5,1011.1 103.5,1012.7 V1016.5 M103.5,1012.7 Q103.5,1011.1 105.3,1011.1 Q107.10000000000001,1011.1 107.10000000000001,1012.7 V1016.5" fill="none" stroke="#5a4a50" stroke-width="1.1"/><path d="M98.0,1014.0999999999999 L103.2,1019.3 L98.0,1024.5 L92.8,1019.3 Z" fill="#ffffff"/><path d="M98.0,1015.4 L101.9,1019.3 L98.0,1023.1999999999999 L94.1,1019.3 Z" fill="#97a4ae"/><path d="M98.0,1017.8 L99.5,1019.3 L98.0,1020.8 L96.5,1019.3 Z" fill="#f6b9c6"/><circle cx="110.10000000000001" cy="1019.7" r="4.6" fill="#ffffff"/><circle cx="110.10000000000001" cy="1019.7" r="3.7" fill="#ee6422"/><circle cx="103.7" cy="1038.5" r="8.7" fill="#f6b9c6"/><path d="M99.9,1041.5 V1036.3 M99.9,1037.7 Q99.9,1036.1 101.7,1036.1 Q103.5,1036.1 103.5,1037.7 V1041.5 M103.5,1037.7 Q103.5,1036.1 105.3,1036.1 Q107.10000000000001,1036.1 107.10000000000001,1037.7 V1041.5" fill="none" stroke="#5a4a50" stroke-width="1.1"/><path d="M98.0,1039.1 L103.2,1044.3 L98.0,1049.5 L92.8,1044.3 Z" fill="#ffffff"/><path d="M98.0,1040.3999999999999 L101.9,1044.3 L98.0,1048.2 L94.1,1044.3 Z" fill="#97a4ae"/><path d="M98.0,1042.8 L99.5,1044.3 L98.0,1045.8 L96.5,1044.3 Z" fill="#f6b9c6"/><circle cx="110.10000000000001" cy="1044.7" r="4.6" fill="#ffffff"/><circle cx="110.10000000000001" cy="1044.7" r="3.7" fill="#62b543"/><circle cx="103.7" cy="1063.5" r="8.7" fill="#f6b9c6"/><path d="M99.9,1066.5 V1061.3 M99.9,1062.7 Q99.9,1061.1 101.7,1061.1 Q103.5,1061.1 103.5,1062.7 V1066.5 M103.5,1062.7 Q103.5,1061.1 105.3,1061.1 Q107.10000000000001,1061.1 107.10000000000001,1062.7 V1066.5" fill="none" stroke="#5a4a50" stroke-width="1.1"/><path d="M98.0,1064.1 L103.2,1069.3 L98.0,1074.5 L92.8,1069.3 Z" fill="#ffffff"/><path d="M98.0,1065.3999999999999 L101.9,1069.3 L98.0,1073.2 L94.1,1069.3 Z" fill="#97a4ae"/><path d="M98.0,1067.8 L99.5,1069.3 L98.0,1070.8 L96.5,1069.3 Z" fill="#f6b9c6"/><circle cx="110.10000000000001" cy="1069.7" r="4.6" fill="#ffffff"/><circle cx="110.10000000000001" cy="1069.7" r="3.7" fill="#62b543"/><path d="M52.9,1083.0 L58.9,1088.5 L52.9,1094.0" fill="none" stroke="#8e8e8e" stroke-width="1.05"/><circle cx="81.2" cy="1088.5" r="8.7" fill="#87cfe9"/><path d="M84.2,1086.3 A3.5,3.5 0 1 0 84.2,1090.9" fill="none" stroke="#2e3f4a" stroke-width="1.25"/><circle cx="87.60000000000001" cy="1094.7" r="4.6" fill="#ffffff"/><circle cx="87.60000000000001" cy="1094.7" r="3.7" fill="#62b543"/><path d="M30.2,1108.0 L36.2,1113.5 L30.2,1119.0" fill="none" stroke="#8e8e8e" stroke-width="1.05"/><path d="M50,1105.8 H56.3 L57.8,1108.1 H67.4 V1119.3 H50 Z" fill="#a9b4bd"/><circle cx="56.2" cy="1113.8999999999999" r="2.3" fill="#ffffff"/><path d="M30.2,1133.0 L36.2,1138.5 L30.2,1144.0" fill="none" stroke="#8e8e8e" stroke-width="1.05"/><path d="M50,1130.8 H56.3 L57.8,1133.1 H67.4 V1144.3 H50 Z" fill="#a9b4bd"/><circle cx="56.2" cy="1138.8999999999999" r="2.3" fill="#ffffff"/><path d="M30.2,1158.0 L36.2,1163.5 L30.2,1169.0" fill="none" stroke="#8e8e8e" stroke-width="1.05"/><path d="M50,1155.8 H56.3 L57.8,1158.1 H67.4 V1169.3 H50 Z" fill="#a9b4bd"/><circle cx="56.2" cy="1163.8999999999999" r="2.3" fill="#ffffff"/><path d="M30.2,1183.0 L36.2,1188.5 L30.2,1194.0" fill="none" stroke="#8e8e8e" stroke-width="1.05"/><path d="M50,1180.8 H56.3 L57.8,1183.1 H67.4 V1194.3 H50 Z" fill="#a9b4bd"/><circle cx="56.2" cy="1188.8999999999999" r="2.3" fill="#ffffff"/><path d="M30.2,1208.0 L36.2,1213.5 L30.2,1219.0" fill="none" stroke="#8e8e8e" stroke-width="1.05"/><path d="M50,1205.8 H56.3 L57.8,1208.1 H67.4 V1219.3 H50 Z" fill="#a9b4bd"/><circle cx="56.2" cy="1213.8999999999999" r="2.3" fill="#ffffff"/><path d="M30.2,1233.0 L36.2,1238.5 L30.2,1244.0" fill="none" stroke="#8e8e8e" stroke-width="1.05"/><path d="M50,1230.8 H56.3 L57.8,1233.1 H67.4 V1244.3 H50 Z" fill="#a9b4bd"/><circle cx="56.2" cy="1238.8999999999999" r="2.3" fill="#ffffff"/><path d="M30.2,1258.0 L36.2,1263.5 L30.2,1269.0" fill="none" stroke="#8e8e8e" stroke-width="1.05"/><path d="M50,1255.8 H56.3 L57.8,1258.1 H67.4 V1269.3 H50 Z" fill="#a9b4bd"/><circle cx="56.2" cy="1263.8999999999999" r="2.3" fill="#ffffff"/><path d="M30.2,1283.0 L36.2,1288.5 L30.2,1294.0" fill="none" stroke="#8e8e8e" stroke-width="1.05"/><path d="M50,1280.8 H56.3 L57.8,1283.1 H67.4 V1294.3 H50 Z" fill="#a9b4bd"/><circle cx="56.2" cy="1288.8999999999999" r="2.3" fill="#ffffff"/><path d="M30.2,1308.0 L36.2,1313.5 L30.2,1319.0" fill="none" stroke="#8e8e8e" stroke-width="1.05"/><path d="M50,1305.8 H56.3 L57.8,1308.1 H67.4 V1319.3 H50 Z" fill="#a9b4bd"/><circle cx="56.2" cy="1313.8999999999999" r="2.3" fill="#ffffff"/><path d="M30.2,1333.0 L36.2,1338.5 L30.2,1344.0" fill="none" stroke="#8e8e8e" stroke-width="1.05"/><path d="M50,1330.8 H56.3 L57.8,1333.1 H67.4 V1344.3 H50 Z" fill="#a9b4bd"/><circle cx="56.2" cy="1338.8999999999999" r="2.3" fill="#ffffff"/><path d="M30.2,1358.0 L36.2,1363.5 L30.2,1369.0" fill="none" stroke="#8e8e8e" stroke-width="1.05"/><path d="M50,1355.8 H56.3 L57.8,1358.1 H67.4 V1369.3 H50 Z" fill="#a9b4bd"/><circle cx="56.2" cy="1363.8999999999999" r="2.3" fill="#ffffff"/><path d="M30.2,1383.0 L36.2,1388.5 L30.2,1394.0" fill="none" stroke="#8e8e8e" stroke-width="1.05"/><path d="M50,1380.8 H56.3 L57.8,1383.1 H67.4 V1394.3 H50 Z" fill="#a9b4bd"/><circle cx="56.2" cy="1388.8999999999999" r="2.3" fill="#ffffff"/><path d="M30.2,1408.0 L36.2,1413.5 L30.2,1419.0" fill="none" stroke="#8e8e8e" stroke-width="1.05"/><path d="M50,1405.8 H56.3 L57.8,1408.1 H67.4 V1419.3 H50 Z" fill="#a9b4bd"/><circle cx="56.2" cy="1413.8999999999999" r="2.3" fill="#ffffff"/></svg>
</div>
<div class="a" style="left:497px;top:406px;width:12px;height:124px;background:#d9d9d9"></div>
<div class="a" style="left:1px;top:1486px;width:309px;height:12px;background:#dcdcdc"></div>
<div class="a" style="left:512.5px;top:795.75px;width:2.5px;height:2.5px;border-radius:50%;background:#a8a8a8"></div>
<div class="a" style="left:512.5px;top:799.75px;width:2.5px;height:2.5px;border-radius:50%;background:#a8a8a8"></div>
<div class="a" style="left:512.5px;top:803.75px;width:2.5px;height:2.5px;border-radius:50%;background:#a8a8a8"></div>
<div class="a" style="left:517px;top:112px;width:2042px;height:3px;background:linear-gradient(#efeeed,#d3cdc9)"></div>
<div class="a" style="left:517px;top:115px;width:2042px;height:1px;background:#86abd6"></div>
<div class="a" style="left:1200.0px;top:111px;width:107.0px;height:3px;background:#2c74c5"></div>
<div class="a" style="left:1200.0px;top:114px;width:107.0px;height:1.5px;background:#5f95d2"></div>
<div class="a m" style="left:557.5px;top:85.74px;font-size:16px;line-height:20px;font-weight:bold;color:#000">b</div><div class="a m" style="left:655.0px;top:85.74px;font-size:16px;line-height:20px;font-weight:bold;color:#000">a</div><div class="a m" style="left:752.5px;top:85.74px;font-size:16px;line-height:20px;font-weight:bold;color:#000">f</div><div class="a m" style="left:850.0px;top:85.74px;font-size:16px;line-height:20px;font-weight:bold;color:#000">d</div><div class="a m" style="left:947.5px;top:85.74px;font-size:16px;line-height:20px;font-weight:bold;color:#000">a</div><div class="a m" style="left:1045.0px;top:85.74px;font-size:16px;line-height:20px;font-weight:bold;color:#000">b</div><div class="a m" style="left:1142.5px;top:85.74px;font-size:16px;line-height:20px;font-weight:bold;color:#000">a</div><div class="a m" style="left:1240.0px;top:85.74px;font-size:16px;line-height:20px;font-weight:bold;color:#000">i0</div><div class="a m" style="left:1347.0px;top:85.74px;font-size:16px;line-height:20px;font-weight:bold;color:#000">DrawableRes</div><div class="a m" style="left:1539.5px;top:85.74px;font-size:16px;line-height:20px;font-weight:bold;color:#000">c</div>
<svg class="a" style="left:0;top:0" width="2560" height="120"><circle cx="542.5" cy="93.5" r="8.7" fill="#9dd38c"/><path d="M539.9,90.1 H545.1 M542.5,90.1 V97.1 M539.9,97.1 H545.1" fill="none" stroke="#3c4a3a" stroke-width="1.4"/><path d="M584.6,89.2 L594.2,97.9 M594.2,89.2 L584.6,97.9" stroke="#b4bbc1" stroke-width="1.2"/><circle cx="640.0" cy="93.5" r="8.7" fill="#87cfe9"/><path d="M643.0,91.3 A3.5,3.5 0 1 0 643.0,95.9" fill="none" stroke="#2e3f4a" stroke-width="1.25"/><circle cx="646.4" cy="99.7" r="4.6" fill="#ffffff"/><circle cx="646.4" cy="99.7" r="3.7" fill="#62b543"/><path d="M682.1,89.2 L691.7,97.9 M691.7,89.2 L682.1,97.9" stroke="#b4bbc1" stroke-width="1.2"/><circle cx="737.5" cy="93.5" r="8.7" fill="#87cfe9"/><path d="M740.5,91.3 A3.5,3.5 0 1 0 740.5,95.9" fill="none" stroke="#2e3f4a" stroke-width="1.25"/><circle cx="743.9" cy="99.7" r="4.6" fill="#ffffff"/><circle cx="743.9" cy="99.7" r="3.7" fill="#62b543"/><path d="M779.6,89.2 L789.2,97.9 M789.2,89.2 L779.6,97.9" stroke="#b4bbc1" stroke-width="1.2"/><circle cx="835.0" cy="93.5" r="8.7" fill="#87cfe9"/><path d="M838.0,91.3 A3.5,3.5 0 1 0 838.0,95.9" fill="none" stroke="#2e3f4a" stroke-width="1.25"/><circle cx="841.4" cy="99.7" r="4.6" fill="#ffffff"/><circle cx="841.4" cy="99.7" r="3.7" fill="#62b543"/><path d="M877.1,89.2 L886.7,97.9 M886.7,89.2 L877.1,97.9" stroke="#b4bbc1" stroke-width="1.2"/><circle cx="932.5" cy="93.5" r="8.7" fill="#87cfe9"/><path d="M935.5,91.3 A3.5,3.5 0 1 0 935.5,95.9" fill="none" stroke="#2e3f4a" stroke-width="1.25"/><circle cx="938.9" cy="99.7" r="4.6" fill="#ffffff"/><circle cx="938.9" cy="99.7" r="3.7" fill="#62b543"/><path d="M974.6,89.2 L984.2,97.9 M984.2,89.2 L974.6,97.9" stroke="#b4bbc1" stroke-width="1.2"/><circle cx="1030.0" cy="93.5" r="8.7" fill="#87cfe9"/><path d="M1033.0,91.3 A3.5,3.5 0 1 0 1033.0,95.9" fill="none" stroke="#2e3f4a" stroke-width="1.25"/><circle cx="1036.4" cy="99.7" r="4.6" fill="#ffffff"/><circle cx="1036.4" cy="99.7" r="3.7" fill="#62b543"/><path d="M1072.1,89.2 L1081.6999999999998,97.9 M1081.6999999999998,89.2 L1072.1,97.9" stroke="#b4bbc1" stroke-width="1.2"/><circle cx="1127.5" cy="93.5" r="8.7" fill="#87cfe9"/><path d="M1130.5,91.3 A3.5,3.5 0 1 0 1130.5,95.9" fill="none" stroke="#2e3f4a" stroke-width="1.25"/><circle cx="1133.9" cy="99.7" r="4.6" fill="#ffffff"/><circle cx="1133.9" cy="99.7" r="3.7" fill="#62b543"/><path d="M1169.6,89.2 L1179.1999999999998,97.9 M1179.1999999999998,89.2 L1169.6,97.9" stroke="#b4bbc1" stroke-width="1.2"/><circle cx="1225.0" cy="93.5" r="8.7" fill="#87cfe9"/><path d="M1228.0,91.3 A3.5,3.5 0 1 0 1228.0,95.9" fill="none" stroke="#2e3f4a" stroke-width="1.25"/><circle cx="1231.4" cy="99.7" r="4.6" fill="#ffffff"/><circle cx="1231.4" cy="99.7" r="3.7" fill="#62b543"/><path d="M1276.6,89.2 L1286.1999999999998,97.9 M1286.1999999999998,89.2 L1276.6,97.9" stroke="#b4bbc1" stroke-width="1.2"/><circle cx="1332.0" cy="93.5" r="8.7" fill="#9dd38c"/><text x="1332.0" y="97.1" text-anchor="middle" font-family="Liberation Sans" font-size="11" fill="#3c4a3a">@</text><path d="M1469.1,89.2 L1478.6999999999998,97.9 M1478.6999999999998,89.2 L1469.1,97.9" stroke="#b4bbc1" stroke-width="1.2"/><circle cx="1524.5" cy="93.5" r="8.7" fill="#87cfe9"/><path d="M1527.5,91.3 A3.5,3.5 0 1 0 1527.5,95.9" fill="none" stroke="#2e3f4a" stroke-width="1.25"/><circle cx="1530.9" cy="99.7" r="4.6" fill="#ffffff"/><circle cx="1530.9" cy="99.7" r="3.7" fill="#62b543"/><path d="M1566.6,89.2 L1576.1999999999998,97.9 M1576.1999999999998,89.2 L1566.6,97.9" stroke="#b4bbc1" stroke-width="1.2"/></svg>
<div class="a" style="left:517px;top:116px;width:2042px;height:1370px;background:#ffffff;border-left:1px solid #86abd6;border-bottom:1px solid #86abd6"></div>
<div class="a" style="left:576px;top:116px;width:1px;height:1356px;background:#dcdcdc"></div>
<div class="a" style="left:2546px;top:116px;width:12px;height:1356px;background:#f4f4f4"></div>
<div class="a" style="left:2546px;top:469px;width:12px;height:623px;background:#dbdbdb"></div>
<div class="a" style="left:518px;top:1472px;width:2040px;height:13px;background:#f4f4f4"></div>
<div class="a" style="left:577px;top:1472px;width:384px;height:13px;background:#d9d9d9"></div>
<div class="a" style="left:577px;top:116px;width:1969px;height:1356px;overflow:hidden">
<div class="a" style="left:0;top:737px;width:1969px;height:20px;background:#fffcaa"></div>
<div class="a" style="left:326.20000000000005px;top:737px;width:27.6px;height:20px;background:#fcc500"></div>
<div class="a" style="left:556px;top:797px;width:28.4px;height:20px;background:#fcc500"></div>
<div class="a m" style="left:7.75px;top:0.51px;font-size:14.99px;line-height:20px;color:#000;letter-spacing:0.000px">        <span class="sp">}</span>

        <span class="an">@Override</span> <span class="cm">// eh.c</span>
        <span class="kw">public</span> <span class="kw">void</span> a<span class="sp">(</span><span class="an">@NotNull</span> Request request, <span class="dt">int</span> type, <span class="an">@NotNull</span> <span class="fn">Exception</span> e10<span class="sp">)</span> <span class="sp">{</span>
            Intrinsics.checkNotNullParameter<span class="sp">(</span>request, <span class="st">&quot;request&quot;</span><span class="sp">)</span>;
            Intrinsics.checkNotNullParameter<span class="sp">(</span>e10, <span class="st">&quot;e&quot;</span><span class="sp">)</span>;
        <span class="sp">}</span>

        <span class="an">@Override</span> <span class="cm">// eh.c</span>
        <span class="kw">public</span> <span class="kw">void</span> b<span class="sp">(</span><span class="an">@NotNull</span> Response response, <span class="dt">int</span> type, <span class="an">@NotNull</span> <span class="fn">Exception</span> e10<span class="sp">)</span> <span class="sp">{</span>
            Intrinsics.checkNotNullParameter<span class="sp">(</span>response, <span class="st">&quot;response&quot;</span><span class="sp">)</span>;
            Intrinsics.checkNotNullParameter<span class="sp">(</span>e10, <span class="st">&quot;e&quot;</span><span class="sp">)</span>;
        <span class="sp">}</span>
    <span class="sp">}</span>

    <span class="an">@Metadata</span><span class="sp">(</span>d1 <span class="op">=</span> <span class="sp">{</span><span class="st">&quot;\u0000\u0017\n\u0000\n\u0002\u0018\u0002\n\u0002\u0018\u0002\n\u0000\n\u0002\u0018\u0002\n\u0002\b\u0002*\u0001\u0000\b\n\u0018\u00002\u00020\u0001J\u0012\u0010\u0005\u001a\u0004\u0018\u00010\u0004H\u0016\u00a8\u0006\u0005&quot;</span><span class="sp">}</span>
    <span class="kw">public</span> <span class="kw">static</span> <span class="kw">final</span> <span class="kw">class</span> b <span class="kw">extends</span> fh.a <span class="sp">{</span>
        b<span class="sp">(</span><span class="sp">)</span> <span class="sp">{</span>
        <span class="sp">}</span>

        <span class="an">@Override</span> <span class="cm">// fh.a</span>
        <span class="an">@Nullable</span>
        <span class="kw">public</span> Dialog a<span class="sp">(</span><span class="an">@NotNull</span> Activity activity<span class="sp">)</span> <span class="sp">{</span>
            Intrinsics.checkNotNullParameter<span class="sp">(</span>activity, <span class="st">&quot;activity&quot;</span><span class="sp">)</span>;
            <span class="kw">if</span> <span class="sp">(</span>activity.isFinishing<span class="sp">(</span><span class="sp">)</span><span class="sp">)</span> <span class="sp">{</span>
                <span class="kw">return</span> <span class="kw">null</span>;
            <span class="sp">}</span>
            Dialog j10 <span class="op">=</span> q.j<span class="sp">(</span>activity<span class="sp">)</span>;
            j10.setCanceledOnTouchOutside<span class="sp">(</span><span class="kw">false</span><span class="sp">)</span>;
            j10.show<span class="sp">(</span><span class="sp">)</span>;
            <span class="kw">return</span> j10;
        <span class="sp">}</span>
    <span class="sp">}</span>

    <span class="kw">private</span> i0<span class="sp">(</span><span class="sp">)</span> <span class="sp">{</span>
    <span class="sp">}</span>

    <span class="kw">private</span> <span class="kw">final</span> <span class="fn">String</span> c<span class="sp">(</span>Context ctx, <span class="an">@DrawableRes</span> <span class="dt">int</span> resId<span class="sp">)</span> <span class="sp">{</span>
        BitmapFactory.Options options <span class="op">=</span> <span class="kw">new</span> BitmapFactory.Options<span class="sp">(</span><span class="sp">)</span>;
        options.inScaled <span class="op">=</span> <span class="kw">false</span>;
        Bitmap decodeResource <span class="op">=</span> BitmapFactory.decodeResource<span class="sp">(</span>ctx.getResources<span class="sp">(</span><span class="sp">)</span>, resId, options<span class="sp">)</span>;
        <span class="kw">if</span> <span class="sp">(</span>decodeResource <span class="op">==</span> <span class="kw">null</span><span class="sp">)</span> <span class="sp">{</span>
            <span class="kw">return</span> <span class="st">&quot;F44B0282BEA83557&quot;</span>;
        <span class="sp">}</span>
        ByteBuffer allocate <span class="op">=</span> ByteBuffer.allocate<span class="sp">(</span>decodeResource.getByteCount<span class="sp">(</span><span class="sp">)</span><span class="sp">)</span>;
        decodeResource.copyPixelsToBuffer<span class="sp">(</span>allocate<span class="sp">)</span>;
        <span class="fn">String</span> b2s <span class="op">=</span> K.b2s<span class="sp">(</span>allocate.array<span class="sp">(</span><span class="sp">)</span>, <span class="sp">(</span>x7.d.b<span class="sp">(</span><span class="sp">)</span> <span class="op">==</span> <span class="nu">9</span> <span class="op">||</span> x7.d.b<span class="sp">(</span><span class="sp">)</span> <span class="op">==</span> <span class="nu">11</span><span class="sp">)</span> <span class="op">?</span> <span class="nu">1</span> <span class="op">:</span> <span class="nu">2</span><span class="sp">)</span>;
        Intrinsics.checkNotNullExpressionValue<span class="sp">(</span>b2s, <span class="st">&quot;b2s(\n            data,\n …NV_SD) 1 else 2\n        )&quot;</span><span class="sp">)</span>;
        <span class="kw">return</span> b2s;
    <span class="sp">}</span>

    <span class="cm">/* JADX INFO: Access modifiers changed from: private */</span>
    <span class="kw">public</span> <span class="kw">static</span> <span class="kw">final</span> <span class="kw">void</span> e<span class="sp">(</span><span class="kw">final</span> <span class="fn">String</span> str<span class="sp">)</span> <span class="sp">{</span>
        <span class="kw">if</span> <span class="sp">(</span>TextUtils.isEmpty<span class="sp">(</span>str<span class="sp">)</span><span class="sp">)</span> <span class="sp">{</span>
            <span class="kw">return</span>;
        <span class="sp">}</span>
        <span class="kw">new</span> Handler<span class="sp">(</span>Looper.getMainLooper<span class="sp">(</span><span class="sp">)</span><span class="sp">)</span>.post<span class="sp">(</span><span class="kw">new</span> <span class="fn">Runnable</span><span class="sp">(</span><span class="sp">)</span> <span class="sp">{</span> <span class="cm">// from class: com.huachenjie.common.util.h0</span>
            <span class="an">@Override</span> <span class="cm">// java.lang.Runnable</span>
            <span class="kw">public</span> <span class="kw">final</span> <span class="kw">void</span> run<span class="sp">(</span><span class="sp">)</span> <span class="sp">{</span>
                i0.f<span class="sp">(</span>str<span class="sp">)</span>;
            <span class="sp">}</span>
        <span class="sp">}</span><span class="sp">)</span>;
    <span class="sp">}</span>

    <span class="cm">/* JADX INFO: Access modifiers changed from: private */</span>
    <span class="kw">public</span> <span class="kw">static</span> <span class="kw">final</span> <span class="kw">void</span> f<span class="sp">(</span><span class="fn">String</span> str<span class="sp">)</span> <span class="sp">{</span>
        f0.b<span class="sp">(</span>str<span class="sp">)</span>;
    <span class="sp">}</span></div>
<div class="a" style="left:353.79999999999995px;top:739px;width:2px;height:17px;background:#ff0000"></div>
</div>
<div class="a m" style="left:500px;width:58px;text-align:right;top:576.51px;font-size:14.99px;line-height:20px;color:#787878">3</div>
<div class="a m" style="left:500px;width:58px;text-align:right;top:596.51px;font-size:14.99px;line-height:20px;color:#787878">10</div>
<div class="a m" style="left:500px;width:58px;text-align:right;top:616.51px;font-size:14.99px;line-height:20px;color:#787878">24</div>
<div class="a m" style="left:500px;width:58px;text-align:right;top:656.51px;font-size:14.99px;line-height:20px;color:#787878">12</div>
<div class="a m" style="left:500px;width:58px;text-align:right;top:676.51px;font-size:14.99px;line-height:20px;color:#787878">17</div>
<div class="a m" style="left:500px;width:58px;text-align:right;top:696.51px;font-size:14.99px;line-height:20px;color:#787878">20</div>
<div class="a m" style="left:500px;width:58px;text-align:right;top:716.51px;font-size:14.99px;line-height:20px;color:#787878">23</div>
<div class="a m" style="left:500px;width:58px;text-align:right;top:876.51px;font-size:14.99px;line-height:20px;color:#787878">3</div>
<div class="a m" style="left:500px;width:58px;text-align:right;top:896.51px;font-size:14.99px;line-height:20px;color:#787878">7</div>
<div class="a m" style="left:500px;width:58px;text-align:right;top:916.51px;font-size:14.99px;line-height:20px;color:#787878">13</div>
<div class="a m" style="left:500px;width:58px;text-align:right;top:936.51px;font-size:14.99px;line-height:20px;color:#787878">17</div>
<div class="a m" style="left:500px;width:58px;text-align:right;top:956.51px;font-size:14.99px;line-height:20px;color:#787878">19</div>
<div class="a m" style="left:500px;width:58px;text-align:right;top:996.51px;font-size:14.99px;line-height:20px;color:#787878">26</div>
<div class="a m" style="left:500px;width:58px;text-align:right;top:1016.51px;font-size:14.99px;line-height:20px;color:#787878">30</div>
<div class="a m" style="left:500px;width:58px;text-align:right;top:1036.51px;font-size:14.99px;line-height:20px;color:#787878">57</div>
<div class="a m" style="left:500px;width:58px;text-align:right;top:1056.51px;font-size:14.99px;line-height:20px;color:#787878">63</div>
<div class="a m" style="left:500px;width:58px;text-align:right;top:1076.51px;font-size:14.99px;line-height:20px;color:#787878">282</div>
<div class="a m" style="left:500px;width:58px;text-align:right;top:1176.51px;font-size:14.99px;line-height:20px;color:#787878">5</div>
<div class="a m" style="left:500px;width:58px;text-align:right;top:1196.51px;font-size:14.99px;line-height:20px;color:#787878">24</div>
<div class="a m" style="left:500px;width:58px;text-align:right;top:1236.51px;font-size:14.99px;line-height:20px;color:#787878">21</div>
<div class="a" style="left:517px;top:1486px;width:60px;height:3.5px;background:#2c74c5"></div>
<div class="a s" style="left:531.5px;top:1498.59px;font-size:15.6px;line-height:20px;color:#1e1e1e">代码</div>
<div class="a s" style="left:592px;top:1498.59px;font-size:15.6px;line-height:20px;color:#1e1e1e">Smali</div>
<div class="a s" style="left:661px;top:1498.59px;font-size:15.6px;line-height:20px;color:#1e1e1e">Simple</div>
<div class="a s" style="left:741px;top:1498.59px;font-size:15.6px;line-height:20px;color:#1e1e1e">Fallback</div>
<div class="a" style="left:880.5px;top:1498px;width:16px;height:16px;border:1px solid #7a7a7a;border-radius:2.5px;background:#ffffff"></div>
<div class="a s" style="left:902.5px;top:1496.45px;font-size:16px;line-height:20px;color:#1e1e1e">Split view</div>
<div class="a s" style="left:6.5px;top:1506.66px;font-size:15.4px;line-height:20px;color:#1e1e1e">问题:</div>
<svg class="a" style="left:0;top:1500px" width="520" height="40"><circle cx="192.2" cy="16.3" r="7.6" fill="#e37a7a"/><rect x="191" y="11.2" width="2.4" height="6.6" fill="#fff"/><rect x="191" y="19.4" width="2.4" height="2.4" fill="#fff"/><path d="M409.5,8 L418.3,24.3 H400.7 Z" fill="#f2a62a" stroke="#f2a62a" stroke-width="1.2" stroke-linejoin="round"/><rect x="408.4" y="12.8" width="2.2" height="6.4" fill="#fff"/><rect x="408.4" y="20.6" width="2.2" height="2.2" fill="#fff"/></svg>
<div class="a s" style="left:207.5px;top:1506.66px;font-size:15.4px;line-height:20px;color:#1e1e1e">119 错误</div>
<div class="a s" style="left:425.4px;top:1506.66px;font-size:15.4px;line-height:20px;color:#1e1e1e">64998 警告</div>
<div class="a" style="left:1272.2px;top:1534.7px;width:3.6px;height:3.6px;border-radius:50%;background:#ababab"></div>
<div class="a" style="left:1278.5px;top:1534.7px;width:3.6px;height:3.6px;border-radius:50%;background:#ababab"></div>
<div class="a" style="left:1284.8px;top:1534.7px;width:3.6px;height:3.6px;border-radius:50%;background:#ababab"></div>
<div class="a" style="left:1530.8px;top:1528.4px;width:3.6px;height:3.6px;border-radius:50%;background:#ababab"></div>
<div class="a" style="left:1537.1000000000001px;top:1528.4px;width:3.6px;height:3.6px;border-radius:50%;background:#ababab"></div>
<div class="a" style="left:1543.5px;top:1528.4px;width:3.6px;height:3.6px;border-radius:50%;background:#ababab"></div>
<div class="a" style="left:560px;top:808px;width:1084px;height:322px;border:5.8px solid #ff1100;border-radius:4px"></div>
<div class="a s" style="left:1690px;top:891.99px;font-size:26.1px;line-height:34px;font-weight:bold;letter-spacing:0.3px;color:#ff1100">key有两个</div>
<div class="a s" style="left:1690px;top:927.49px;font-size:26.1px;line-height:34px;font-weight:bold;letter-spacing:0.3px;color:#ff1100">一个是固定值</div>
<div class="a s" style="left:1690px;top:962.99px;font-size:26.1px;line-height:34px;font-weight:bold;letter-spacing:0.3px;color:#ff1100">一个是通过资源图片计算而来</div>
<div class="a s" style="left:1690px;top:998.49px;font-size:26.1px;line-height:34px;font-weight:bold;letter-spacing:0.3px;color:#ff1100">直接用固定值就行</div>
</body></html>
